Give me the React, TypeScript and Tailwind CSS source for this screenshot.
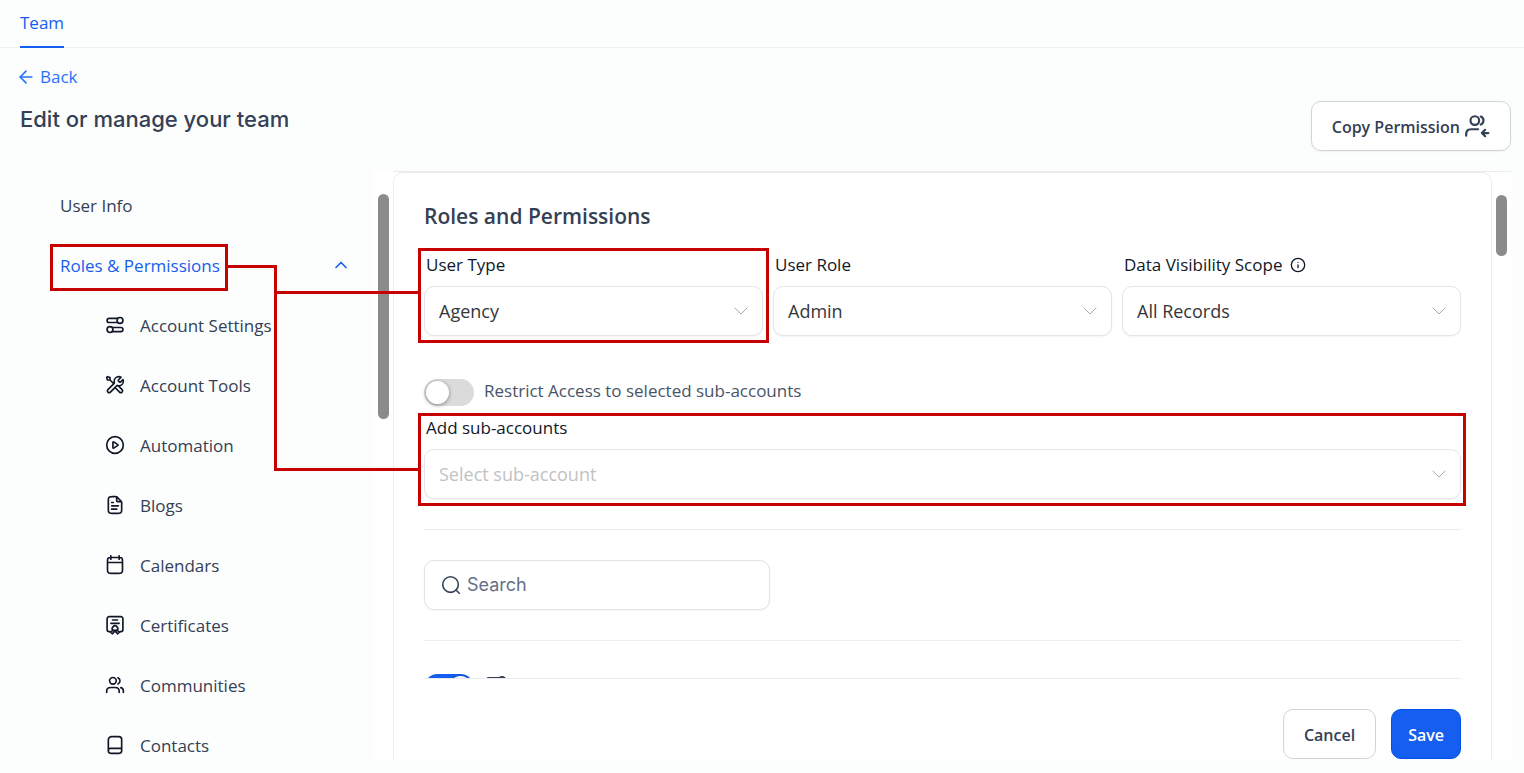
import { type ReactNode } from "react";
import { ArrowLeft, ChevronDown, ChevronUp, Info } from "lucide-react";

interface IconProps {
  children: ReactNode;
  className?: string;
}

interface SelectFieldProps {
  id: string;
  label: string;
  options: string[];
  placeholder?: boolean;
  hint?: ReactNode;
}

function Icon({ children, className = "size-5" }: IconProps) {
  return (
    <svg
      viewBox="0 0 24 24"
      fill="none"
      stroke="currentColor"
      strokeWidth="2"
      strokeLinecap="round"
      strokeLinejoin="round"
      aria-hidden="true"
      className={`shrink-0 ${className}`}
    >
      {children}
    </svg>
  );
}

const togglesIcon = (
  <>
    <path d="M15 4H5a2.500 2.500 0 0 0 0 5h10" />
    <circle cx="18" cy="6.500" r="3.500" />
    <path d="M9 15h10a2.500 2.500 0 0 1 0 5H9" />
    <circle cx="6" cy="17.500" r="3.500" />
  </>
);

const menuItems = [
  { label: "Account Settings", icon: togglesIcon },
  {
    label: "Account Tools",
    icon: (
      <path d="M6 6L10.5 10.5M6 6H3L2 3L3 2L6 3V6ZM19.259 2.741L16.631 5.369C16.235 5.765 16.037 5.963 15.963 6.191C15.898 6.392 15.898 6.608 15.963 6.809C16.037 7.037 16.235 7.235 16.631 7.631L16.869 7.869C17.265 8.265 17.463 8.463 17.691 8.537C17.892 8.602 18.108 8.602 18.309 8.537C18.537 8.463 18.735 8.265 19.131 7.869L21.589 5.411C21.854 6.055 22 6.76 22 7.5C22 10.538 19.538 13 16.5 13C16.134 13 15.776 12.964 15.43 12.896C14.944 12.8 14.7 12.752 14.553 12.767C14.397 12.782 14.319 12.806 14.18 12.88C14.05 12.95 13.919 13.081 13.657 13.343L6.5 20.5C5.672 21.328 4.328 21.328 3.5 20.5C2.672 19.672 2.672 18.328 3.5 17.5L10.657 10.343C10.919 10.081 11.05 9.95 11.12 9.819C11.194 9.681 11.218 9.603 11.233 9.447C11.248 9.299 11.2 9.056 11.104 8.57C11.036 8.224 11 7.866 11 7.5C11 4.462 13.462 2 16.5 2C17.505 2 18.448 2.27 19.259 2.741ZM12 15L17.5 20.5C18.328 21.328 19.672 21.328 20.5 20.5C21.328 19.672 21.328 18.328 20.5 17.5L15.975 12.975C15.655 12.945 15.343 12.887 15.041 12.804C14.652 12.698 14.225 12.775 13.94 13.06L12 15Z" />
    ),
  },
  {
    label: "Automation",
    icon: (
      <>
        <circle cx="12" cy="12" r="10" />
        <path d="M9.5 8.8v6.4a.6.6 0 0 0 .9.5l5-3.2a.6.6 0 0 0 0-1l-5-3.2a.6.6 0 0 0-.9.5z" />
      </>
    ),
  },
  {
    label: "Blogs",
    icon: (
      <path d="M14 2.27V6.4C14 6.96 14 7.24 14.11 7.45C14.2 7.64 14.36 7.8 14.55 7.89C14.76 8 15.04 8 15.6 8H19.73M14 17H8M16 13H8M20 9.99V17.2C20 18.88 20 19.72 19.67 20.36C19.39 20.93 18.93 21.39 18.36 21.67C17.72 22 16.88 22 15.2 22H8.8C7.12 22 6.28 22 5.64 21.67C5.07 21.39 4.61 20.93 4.33 20.36C4 19.72 4 18.88 4 17.2V6.8C4 5.12 4 4.28 4.33 3.64C4.61 3.07 5.07 2.61 5.64 2.33C6.28 2 7.12 2 8.8 2H12.01C12.75 2 13.11 2 13.46 2.08C13.76 2.16 14.06 2.28 14.33 2.44C14.63 2.63 14.89 2.89 15.41 3.41L18.59 6.59C19.11 7.11 19.37 7.37 19.56 7.67C19.72 7.94 19.84 8.24 19.92 8.54C20 8.89 20 9.25 20 9.99ZM8 9H10" />
    ),
  },
  {
    label: "Calendars",
    icon: (
      <path d="M21 9H3M17 1v4M7 1v4M7.8 22h8.4c1.68 0 2.52 0 3.16-.33a3 3 0 0 0 1.31-1.31C21 19.72 21 18.88 21 17.2V7.8c0-1.68 0-2.52-.33-3.16a3 3 0 0 0-1.31-1.31C18.72 3 17.88 3 16.2 3H7.8c-1.68 0-2.52 0-3.16.33a3 3 0 0 0-1.31 1.31C3 5.28 3 6.12 3 7.8v9.4c0 1.68 0 2.52.33 3.16a3 3 0 0 0 1.31 1.31C5.28 22 6.12 22 7.8 22z" />
    ),
  },
  {
    label: "Certificates",
    icon: (
      <>
        <path d="M6 20H5a2.500 2.500 0 0 1-2.500-2.500V4.500A2.500 2.500 0 0 1 5 2h14a2.500 2.500 0 0 1 2.500 2.500v13A2.500 2.500 0 0 1 19 20h-1" />
        <path d="M9 6h6M7 10h10" />
        <path d="M9.500 18.500a3.300 3.300 0 1 1 5 0" />
        <path d="M9.500 18.500h5M9.500 18.500L6.500 20.500 9 22.500l2.500-3M14.500 18.500l3 2L15 22.500l-2.500-3" />
      </>
    ),
  },
  {
    label: "Communities",
    icon: (
      <path d="M22 21V19C22 17.136 20.725 15.57 19 15.126M15.5 3.291C16.966 3.884 18 5.321 18 7C18 8.679 16.966 10.116 15.5 10.709M17 21C17 19.136 17 18.204 16.696 17.469C16.29 16.489 15.511 15.711 14.531 15.305C13.796 15 12.864 15 11 15H8C6.136 15 5.204 15 4.469 15.305C3.489 15.711 2.71 16.489 2.304 17.469C2 18.204 2 19.136 2 21M13.5 7C13.5 9.209 11.709 11 9.5 11C7.291 11 5.5 9.209 5.5 7C5.5 4.791 7.291 3 9.5 3C11.709 3 13.5 4.791 13.5 7Z" />
    ),
  },
  {
    label: "Contacts",
    icon: (
      <path d="M20 16H6.500A2.500 2.500 0 0 0 4 18.500M8 2h8.500A3.500 3.500 0 0 1 20 5.500V19a3 3 0 0 1-3 3H7a3 3 0 0 1-3-3V6a4 4 0 0 1 4-4z" />
    ),
  },
];

function SelectField({
  id,
  label,
  options,
  placeholder = false,
  hint,
}: SelectFieldProps) {
  return (
    <div className="flex flex-col gap-2">
      <div className="flex items-center gap-2 pl-0.5 text-[#101828]">
        <label htmlFor={id} className="text-[17px] leading-[26px]">
          {label}
        </label>
        {hint}
      </div>
      <div className="relative">
        <select
          id={id}
          className={`h-[50px] w-full appearance-none rounded-[10px] border border-[#e4e5ea] bg-white pr-10 pl-3.5 text-lg shadow-xs outline-none focus:border-[#155eef] ${
            placeholder ? "text-[#c2c2c2]" : "text-[#333639]"
          }`}
        >
          {options.map((option) => (
            <option key={option}>{option}</option>
          ))}
        </select>
        <ChevronDown
          strokeWidth={1}
          className="pointer-events-none absolute top-1/2 right-2.5 size-6 -translate-y-1/2 text-[#a9abb0]"
        />
      </div>
    </div>
  );
}

function Switch({ id, on = false }: { id: string; on?: boolean }) {
  return (
    <input
      id={id}
      type="checkbox"
      role="switch"
      aria-label={on ? "Account Settings" : undefined}
      defaultChecked={on}
      className="flex h-[27px] w-[50px] shrink-0 appearance-none items-center rounded-full bg-[#dbdbdb] px-0.5 before:size-[23px] before:rounded-full before:bg-white before:shadow-[0_1px_4px_rgba(0,0,0,0.4)] checked:justify-end checked:bg-[#155eef]"
    />
  );
}

function Highlight({ className }: { className: string }) {
  return (
    <div
      className={`pointer-events-none absolute border-3 border-[#c70000] ${className}`}
    />
  );
}

export default function App() {
  return (
    <div className="flex h-screen flex-col bg-[#fcfdfd] pb-3.5 font-['Open_Sans',sans-serif] text-[#344054]">
      <nav className="flex h-12 shrink-0 border-b border-[#eff0f2] px-5">
        <a
          href="#team"
          className="-mb-px border-b-2 border-[#155eef] pt-[11px] text-[17px] leading-6 text-[#155eef]"
        >
          Team
        </a>
      </nav>

      <header className="shrink-0 pt-[15px] pr-[13px] pl-5">
        <a
          href="#back"
          className="inline-flex items-center gap-1 align-top text-[17px] leading-7 text-[#2970ff]"
        >
          <ArrowLeft className="-ml-1 size-5" strokeWidth={2} />
          Back
        </a>
        <div className="mt-2.5 flex items-start justify-between">
          <h1 className="pt-1 font-['Inter',sans-serif] text-[22px] leading-7 font-medium">
            Edit or manage your team
          </h1>
          <button
            type="button"
            className="flex h-[50px] items-center gap-1 rounded-[10px] border border-[#d0d5dd] bg-white px-5 text-base font-semibold shadow-xs"
          >
            <span className="pt-0.5">Copy Permission</span>
            <Icon className="size-[26px]">
              <path d="M2 21c0-3.500.2-6 5-6h6M15.500 3.300a4 4 0 0 1 0 7.400M22.500 18.500H17M19.500 15.500l-3 3 3 3" />
              <circle cx="10" cy="7" r="4" />
            </Icon>
          </button>
        </div>
      </header>

      <div className="relative mt-5 flex min-h-0 flex-1 pr-[13px]">
        <aside className="flex w-[393px] shrink-0 overflow-hidden">
          <nav className="flex-1 pt-1 pr-[22px] pl-[60px] text-[17px] leading-6">
            <a href="#user-info" className="flex h-15 items-center">
              <span className="pt-0.5">User Info</span>
            </a>
            <a
              href="#roles"
              className="flex h-15 items-center justify-between text-[#155eef]"
            >
              <span className="relative pt-0.5">
                Roles &amp; Permissions
                <Highlight className="-top-2 -right-2 -bottom-[13px] -left-2.5" />
              </span>
              <ChevronUp className="size-5" strokeWidth={2} />
            </a>
            {menuItems.map((item) => (
              <a
                key={item.label}
                href="#permissions"
                className="ml-[45px] flex h-15 items-center gap-[15px] whitespace-nowrap"
              >
                <span className="text-[#101828]">
                  <Icon>{item.icon}</Icon>
                </span>
                <span className="pt-0.5">{item.label}</span>
              </a>
            ))}
          </nav>
          <div className="w-5 bg-white pt-[23px] pl-[5px]">
            <div className="h-[225px] w-[11px] rounded-full bg-[#8b8b8b]" />
          </div>
        </aside>

        <main className="flex min-w-0 flex-1 border-t border-[#eaecf0] bg-white">
          <section className="flex min-w-0 flex-1 flex-col rounded-t-[10px] border border-b-0 border-[#eaecf0] px-[22px]">
            <div className="min-h-0 flex-1 overflow-hidden px-2 pt-[27px]">
              <h2 className="text-[21px] leading-8 font-semibold">
                Roles and Permissions
              </h2>

              <div className="mt-5 grid grid-cols-3 gap-2.5">
                <div className="relative">
                  <SelectField
                    id="user-type"
                    label="User Type"
                    options={["Agency", "Account"]}
                  />
                  <Highlight className="-inset-x-1.5 -top-1 -bottom-[7px]" />
                </div>
                <SelectField
                  id="user-role"
                  label="User Role"
                  options={["Admin", "User"]}
                />
                <SelectField
                  id="data-scope"
                  label="Data Visibility Scope"
                  options={["All Records", "Assigned Records"]}
                  hint={<Info className="size-4" strokeWidth={2} />}
                />
              </div>

              <div className="mt-[43px] flex h-7 items-start gap-2.5 text-[#475467]">
                <Switch id="restrict" />
                <label htmlFor="restrict" className="text-[17px] leading-6">
                  Restrict Access to selected sub-accounts
                </label>
              </div>

              <div className="relative mt-2">
                <SelectField
                  id="sub-accounts"
                  label="Add sub-accounts"
                  options={["Select sub-account"]}
                  placeholder
                />
                <Highlight className="-top-0.5 -right-[5px] -bottom-[7px] -left-1.5" />
              </div>

              <hr className="mt-[30px] border-[#eaecf0]" />

              <div className="relative my-[30px] w-1/3">
                <Icon className="absolute top-3.5 left-4 size-[22px] stroke-[1.75]">
                  <circle cx="11.500" cy="11.500" r="8.500" />
                  <path d="M17.500 17.500L21 21" />
                </Icon>
                <input
                  type="search"
                  aria-label="Search"
                  placeholder="Search"
                  className="h-[50px] w-full rounded-[10px] border border-[#e0e2e8] pr-4 pb-0.5 pl-[42px] font-['Inter',sans-serif] text-lg shadow-xs outline-none placeholder:text-[#667085] focus:border-[#155eef]"
                />
              </div>

              <hr className="border-[#eaecf0]" />

              <div className="mt-[33px] flex items-start gap-2.5">
                <Switch id="account-settings" on />
                <Icon className="size-6">{togglesIcon}</Icon>
              </div>
            </div>

            <footer className="mx-2 flex shrink-0 justify-end gap-[15px] border-t border-[#eaecf0] pt-[30px] text-base font-semibold">
              <button
                type="button"
                className="h-[50px] rounded-[10px] border border-[#d0d5dd] bg-white px-5 pt-0.5"
              >
                Cancel
              </button>
              <button
                type="button"
                className="h-[50px] rounded-[10px] border border-[#004eeb] bg-[#155eef] px-4 pt-0.5 text-white"
              >
                Save
              </button>
            </footer>
          </section>
          <div className="w-[19px] pt-[23px] pl-1">
            <div className="h-[61px] w-[11px] rounded-full bg-[#8b8b8b]" />
          </div>
        </main>

        {/* connector from the active menu entry to the two highlighted fields */}
        <svg
          viewBox="0 0 192 206"
          fill="none"
          stroke="#c70000"
          strokeWidth="3"
          aria-hidden="true"
          className="pointer-events-none absolute top-[94px] left-[227px] h-[206px] w-[192px]"
        >
          <path d="M0 1.500H48.500V204.500H192M48.500 27.500H192" />
        </svg>
      </div>
    </div>
  );
}
